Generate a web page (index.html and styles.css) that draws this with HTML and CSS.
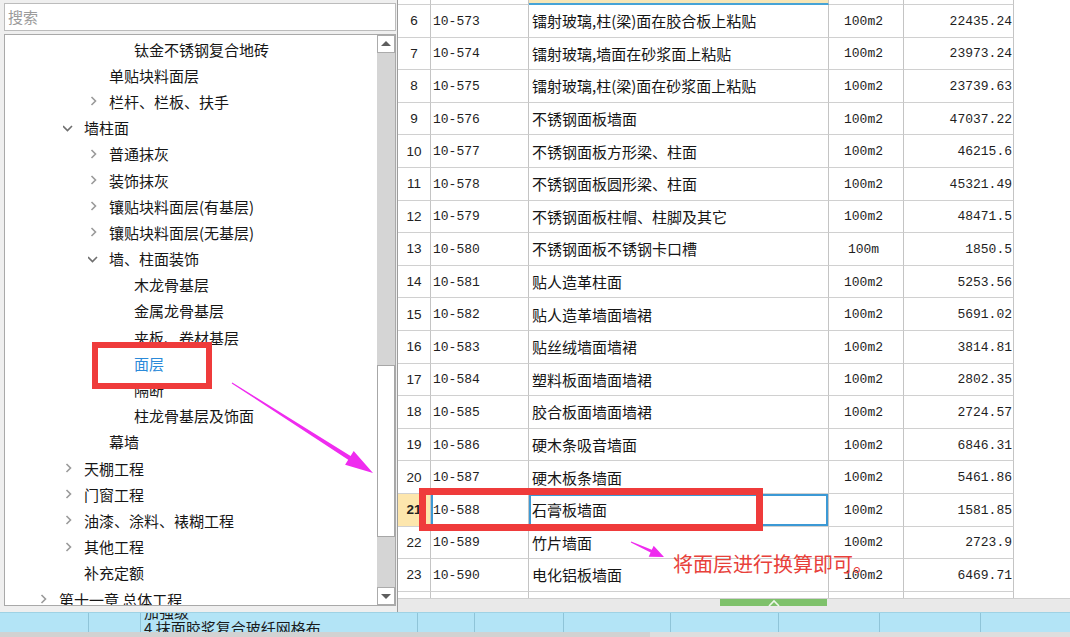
FILE: index.html
```html
<!DOCTYPE html>
<html lang="zh-CN">
<head>
<meta charset="utf-8">
<title>定额</title>
<link rel="stylesheet" href="styles.css">
</head>
<body>
<div class="screen">
  <div class="main">
    <aside class="left">
      <div class="search">搜索</div>
      <div class="treebox">
        <ul class="tree">
          <li class="l3"><span class="sp"></span>钛金不锈钢复合地砖</li>
          <li class="l2"><span class="sp"></span>单贴块料面层</li>
          <li class="l2"><svg class="chev" viewBox="0 0 12 10"><polyline points="1.5,1 5.5,5 1.5,9"/></svg>栏杆、栏板、扶手</li>
          <li class="l1"><svg class="chev down" viewBox="0 0 12 10"><polyline points="0,3 4.5,7.5 9,3"/></svg>墙柱面</li>
          <li class="l2"><svg class="chev" viewBox="0 0 12 10"><polyline points="1.5,1 5.5,5 1.5,9"/></svg>普通抹灰</li>
          <li class="l2"><svg class="chev" viewBox="0 0 12 10"><polyline points="1.5,1 5.5,5 1.5,9"/></svg>装饰抹灰</li>
          <li class="l2"><svg class="chev" viewBox="0 0 12 10"><polyline points="1.5,1 5.5,5 1.5,9"/></svg>镶贴块料面层(有基层)</li>
          <li class="l2"><svg class="chev" viewBox="0 0 12 10"><polyline points="1.5,1 5.5,5 1.5,9"/></svg>镶贴块料面层(无基层)</li>
          <li class="l2"><svg class="chev down" viewBox="0 0 12 10"><polyline points="0,3 4.5,7.5 9,3"/></svg>墙、柱面装饰</li>
          <li class="l3"><span class="sp"></span>木龙骨基层</li>
          <li class="l3"><span class="sp"></span>金属龙骨基层</li>
          <li class="l3"><span class="sp"></span>夹板、卷材基层</li>
          <li class="l3 sel"><span class="sp"></span>面层</li>
          <li class="l3"><span class="sp"></span>隔断</li>
          <li class="l3"><span class="sp"></span>柱龙骨基层及饰面</li>
          <li class="l2"><span class="sp"></span>幕墙</li>
          <li class="l1"><svg class="chev" viewBox="0 0 12 10"><polyline points="1.5,1 5.5,5 1.5,9"/></svg>天棚工程</li>
          <li class="l1"><svg class="chev" viewBox="0 0 12 10"><polyline points="1.5,1 5.5,5 1.5,9"/></svg>门窗工程</li>
          <li class="l1"><svg class="chev" viewBox="0 0 12 10"><polyline points="1.5,1 5.5,5 1.5,9"/></svg>油漆、涂料、裱糊工程</li>
          <li class="l1"><svg class="chev" viewBox="0 0 12 10"><polyline points="1.5,1 5.5,5 1.5,9"/></svg>其他工程</li>
          <li class="l1"><span class="sp"></span>补充定额</li>
          <li class="l0"><svg class="chev" viewBox="0 0 12 10"><polyline points="1.5,1 5.5,5 1.5,9"/></svg>第十一章 总体工程</li>
        </ul>
        <div class="vscroll">
          <div class="sbtn"><svg viewBox="0 0 16 16"><polygon points="3,10 13,10 8,5"/></svg></div>
          <div class="track"><div class="thumb"></div></div>
          <div class="sbtn"><svg viewBox="0 0 16 16"><polygon points="3,6 13,6 8,11"/></svg></div>
        </div>
      </div>
    </aside>

    <section class="grid">
      <div class="rows">
        <div class="row partial"><div class="cell"></div><div class="cell"></div><div class="cell name hl"></div><div class="cell"></div><div class="cell"></div></div>
        <div class="row"><div class="cell num">6</div><div class="cell code">10-573</div><div class="cell name">镭射玻璃,柱(梁)面在胶合板上粘贴</div><div class="cell unit">100m2</div><div class="cell price">22435.24</div></div>
        <div class="row"><div class="cell num">7</div><div class="cell code">10-574</div><div class="cell name">镭射玻璃,墙面在砂浆面上粘贴</div><div class="cell unit">100m2</div><div class="cell price">23973.24</div></div>
        <div class="row"><div class="cell num">8</div><div class="cell code">10-575</div><div class="cell name">镭射玻璃,柱(梁)面在砂浆面上粘贴</div><div class="cell unit">100m2</div><div class="cell price">23739.63</div></div>
        <div class="row"><div class="cell num">9</div><div class="cell code">10-576</div><div class="cell name">不锈钢面板墙面</div><div class="cell unit">100m2</div><div class="cell price">47037.22</div></div>
        <div class="row"><div class="cell num">10</div><div class="cell code">10-577</div><div class="cell name">不锈钢面板方形梁、柱面</div><div class="cell unit">100m2</div><div class="cell price">46215.6</div></div>
        <div class="row"><div class="cell num">11</div><div class="cell code">10-578</div><div class="cell name">不锈钢面板圆形梁、柱面</div><div class="cell unit">100m2</div><div class="cell price">45321.49</div></div>
        <div class="row"><div class="cell num">12</div><div class="cell code">10-579</div><div class="cell name">不锈钢面板柱帽、柱脚及其它</div><div class="cell unit">100m2</div><div class="cell price">48471.5</div></div>
        <div class="row"><div class="cell num">13</div><div class="cell code">10-580</div><div class="cell name">不锈钢面板不锈钢卡口槽</div><div class="cell unit">100m</div><div class="cell price">1850.5</div></div>
        <div class="row"><div class="cell num">14</div><div class="cell code">10-581</div><div class="cell name">贴人造革柱面</div><div class="cell unit">100m2</div><div class="cell price">5253.56</div></div>
        <div class="row"><div class="cell num">15</div><div class="cell code">10-582</div><div class="cell name">贴人造革墙面墙裙</div><div class="cell unit">100m2</div><div class="cell price">5691.02</div></div>
        <div class="row"><div class="cell num">16</div><div class="cell code">10-583</div><div class="cell name">贴丝绒墙面墙裙</div><div class="cell unit">100m2</div><div class="cell price">3814.81</div></div>
        <div class="row"><div class="cell num">17</div><div class="cell code">10-584</div><div class="cell name">塑料板面墙面墙裙</div><div class="cell unit">100m2</div><div class="cell price">2802.35</div></div>
        <div class="row"><div class="cell num">18</div><div class="cell code">10-585</div><div class="cell name">胶合板面墙面墙裙</div><div class="cell unit">100m2</div><div class="cell price">2724.57</div></div>
        <div class="row"><div class="cell num">19</div><div class="cell code">10-586</div><div class="cell name">硬木条吸音墙面</div><div class="cell unit">100m2</div><div class="cell price">6846.31</div></div>
        <div class="row"><div class="cell num">20</div><div class="cell code">10-587</div><div class="cell name">硬木板条墙面</div><div class="cell unit">100m2</div><div class="cell price">5461.86</div></div>
        <div class="row cur"><div class="cell num">21</div><div class="cell code">10-588</div><div class="cell name">石膏板墙面</div><div class="cell unit">100m2</div><div class="cell price">1581.85</div></div>
        <div class="row"><div class="cell num">22</div><div class="cell code">10-589</div><div class="cell name">竹片墙面</div><div class="cell unit">100m2</div><div class="cell price">2723.9</div></div>
        <div class="row"><div class="cell num">23</div><div class="cell code">10-590</div><div class="cell name">电化铝板墙面</div><div class="cell unit">100m2</div><div class="cell price">6469.71</div></div>
        <div class="row"><div class="cell"></div><div class="cell"></div><div class="cell"></div><div class="cell"></div><div class="cell"></div></div>
      </div>
      <div class="hscroll"><div class="hthumb"><svg viewBox="0 0 14 8"><polyline points="2,7 7,2 12,7"/></svg></div></div>
    </section>
  </div>

  <div class="status">
    <div class="sc w1"></div>
    <div class="sc w2"></div>
    <div class="sc w3"><div class="clip">加强级<br>4 抹面胶浆复合玻纤网格布</div></div>
    <div class="sc w4"></div>
    <div class="sc w5"></div>
    <div class="sc w6"></div>
    <div class="sc w7"></div>
    <div class="sc w8"></div>
    <div class="sc w9"></div>
    <div class="sc w10"></div>
  </div>
  <div class="strip"><div class="strip-l"></div></div>

  <div class="mark mark1"></div>
  <div class="mark mark2"></div>
  <svg class="arrows" viewBox="0 0 1070 637">
    <polygon points="232.3,382.6 350.6,456 353.7,451.1 373,473 345.1,464.7 348.2,459.8 231.7,383.4"/>
    <polygon points="631.2,541.5 651.8,549.8 653.7,545.7 664,557 648.7,556.7 650.6,552.6 630.8,542.5"/>
  </svg>
  <div class="note">将面层进行换算即可。</div>
</div>
</body>
</html>
```
FILE: styles.css
```css
* { box-sizing: border-box; margin: 0; padding: 0; }
html, body { width: 1070px; height: 637px; overflow: hidden; }
body {
  background: #dcdcdc;
  font-family: "Noto Sans CJK SC", "Noto Sans", sans-serif;
  color: #1b1b1b;
}
.screen { position: relative; width: 1070px; height: 637px; display: flex; flex-direction: column; }
.main { display: flex; height: 612px; flex: none; }

/* left panel */
.left {
  width: 397px; flex: none; background: #efefef;
  padding: 3px 1px 0 4px;
  display: flex; flex-direction: column; gap: 3px;
}
.search {
  height: 28px; border: 1px solid #bcbcbc; background: #fff;
  color: #9b9b9b; font-size: 15px; line-height: 25px; padding-left: 3px;
}
.treebox {
  height: 572px; flex: none; border: 1px solid #a9a9a9; background: #fff;
  display: flex; overflow: hidden;
}
.tree { flex: 1; list-style: none; padding-top: 1px; overflow: hidden; }
.tree li {
  height: 26.2px; display: flex; align-items: center;
  font-size: 15px; white-space: nowrap; color: #161616;
}
.tree .l0 { padding-left: 35px; }
.tree .l1 { padding-left: 60px; }
.tree .l2 { padding-left: 85px; }
.tree .l3 { padding-left: 110px; }
.tree .sel { color: #2b8ad9; }
.sp { width: 12px; margin-right: 7px; flex: none; }
.chev {
  width: 12px; height: 10px; margin-right: 7px; flex: none; display: block;
  fill: none; stroke: #9a9a9a; stroke-width: 1.6;
}
.chev.down { stroke: #6f6f6f; margin-left: -2px; margin-right: 9px; }

.vscroll { width: 18px; flex: none; display: flex; flex-direction: column; background: #d5d5d5; }
.sbtn {
  height: 18px; flex: none; background: #fff; border: 1px solid #ababab;
  display: flex; align-items: center; justify-content: center;
}
.sbtn svg { width: 16px; height: 16px; fill: #5e5e5e; }
.track { flex: 1; }
.thumb {
  margin-top: 312px; height: 172px; background: #fff;
  border: 1px solid #a7a7a7;
}

/* grid */
.grid {
  flex: 1; border-left: 1px solid #9c9c9c; background: #fff;
  display: flex; flex-direction: column;
}
.rows { flex: 1; overflow: hidden; }
.row {
  display: grid; grid-template-columns: 33px 98px 300px 75px 110px;
  height: 32.6px;
}
.row.partial { height: 5px; }
.cell {
  border-right: 1px solid #c4c4c4; border-bottom: 1px solid #d0d0d0;
  display: flex; align-items: center; overflow: hidden; white-space: nowrap;
}
.cell.hl { background: #f7e6b6; border-bottom: 2px solid #46a3d6; }
.num {
  justify-content: center;
  font-family: "Liberation Sans", Arial, sans-serif; font-size: 13.5px; color: #222;
}
.code, .unit, .price {
  font-family: "Liberation Mono", monospace; font-size: 13px; color: #1e1e1e; padding-top: 1px;
}
.code { padding-left: 2px; }
.name { padding-left: 3px; font-size: 15px; color: #161616; }
.unit { justify-content: center; padding-right: 5px; }
.price { justify-content: flex-end; padding-right: 1px; }
.cur .num { background: #fde6ad; font-weight: bold; }
.cur .code { box-shadow: inset 2px 0 0 #3c99d5; }
.cur .name { box-shadow: inset 0 0 0 2px #3c99d5; }

.hscroll {
  height: 14px; flex: none; background: #e9e9e9; border-top: 1px solid #cfcfcf;
  padding-left: 322px;
}
.hthumb {
  width: 107px; height: 7px; background: #7ec16b;
  display: flex; justify-content: center;
}
.hthumb svg { width: 14px; height: 8px; fill: none; stroke: #eef7ea; stroke-width: 1.6; }

/* status bar */
.status {
  height: 20px; flex: none; display: flex;
  background: #b3e4f6; border-top: 1px solid #9fd2e4;
}
.sc { border-right: 1px solid #8fc4d8; overflow: hidden; flex: none; }
.w1 { width: 89px; } .w2 { width: 52px; } .w3 { width: 277px; }
.w4 { width: 57px; } .w5 { width: 89px; } .w6 { width: 107px; }
.w7 { width: 108px; } .w8 { width: 101px; } .w9 { width: 101px; }
.w10 { flex: 1; border-right: none; }
.clip {
  margin-top: -9px; padding-left: 3px; font-size: 15px; line-height: 16px;
  white-space: nowrap; color: #1b1b1b;
}
.strip { height: 5px; flex: none; background: #dedede; display: flex; }
.strip-l { width: 650px; background: #d2d2d2; }

/* annotations */
.mark { position: absolute; border-style: solid; border-color: #ef3b3b; }
.mark1 { left: 92px; top: 342px; width: 120px; height: 47px; border-width: 6px; }
.mark2 { left: 419px; top: 488px; width: 344px; height: 43px; border-width: 7px; }
.arrows { position: absolute; left: 0; top: 0; width: 1070px; height: 637px; fill: #ef2cef; pointer-events: none; }
.note {
  position: absolute; left: 673px; top: 551px;
  font-size: 20px; line-height: 26px; color: #e8403a; white-space: nowrap;
}
```
